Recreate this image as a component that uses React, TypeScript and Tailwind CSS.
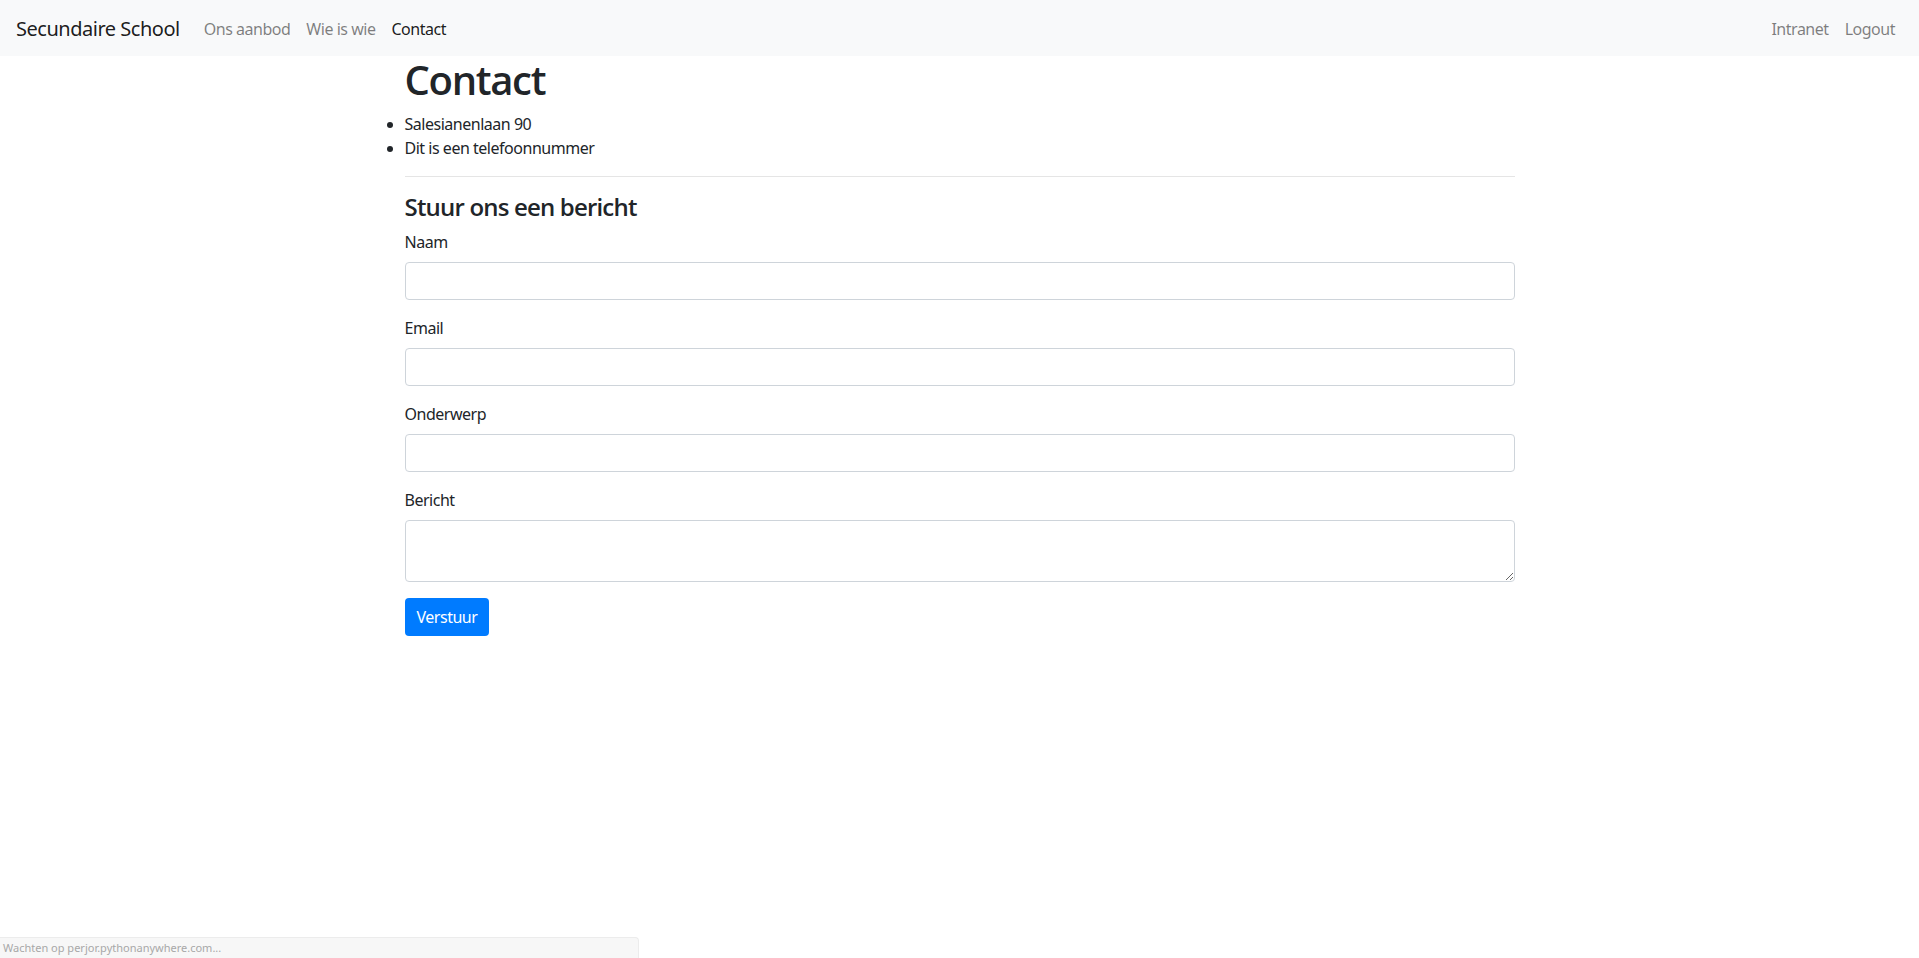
import React from "react"

const font = {
  fontFamily: '"Segoe UI", "Noto Sans", "Liberation Sans", sans-serif',
  letterSpacing: "-0.03em",
}

const headingFont = {
  fontFamily: '"Segoe UI", "Open Sans", "Noto Sans", sans-serif',
}

const NavLink = ({ children, active }: { children: React.ReactNode; active?: boolean }) => (
  <a
    href="#"
    className={
      active
        ? "px-2 pt-[9px] pb-[7px] text-[16px] leading-6 text-[rgba(0,0,0,0.9)]"
        : "px-2 pt-[9px] pb-[7px] text-[16px] leading-6 text-[rgba(0,0,0,0.5)]"
    }
  >
    {children}
  </a>
)

const Field = ({ label, textarea }: { label: string; textarea?: boolean }) => (
  <div className="mb-4">
    <label className="mb-2 block text-[16px] leading-6">{label}</label>
    {textarea ? (
      <textarea
        rows={2}
        className="block h-[62px] w-full rounded-[4px] border border-[#ced4da] px-3 py-[6px] text-[16px] leading-6 outline-none"
      />
    ) : (
      <input
        type="text"
        className="block h-[38px] w-full rounded-[4px] border border-[#ced4da] px-3 py-[6px] text-[16px] leading-6 outline-none"
      />
    )}
  </div>
)

export default function App() {
  return (
    <div className="min-h-screen bg-white text-[#212529]" style={font}>
      <nav className="flex h-14 items-center bg-[#f8f9fa] px-4">
        <a href="#" className="mr-4 pt-[6px] pb-[4px] text-[20px] leading-[30px] text-[rgba(0,0,0,0.9)]">
          Secundaire School
        </a>
        <div className="flex">
          <NavLink>Ons aanbod</NavLink>
          <NavLink>Wie is wie</NavLink>
          <NavLink active>Contact</NavLink>
        </div>
        <div className="ml-auto flex">
          <NavLink>Intranet</NavLink>
          <NavLink>Logout</NavLink>
        </div>
      </nav>

      <div className="mx-auto w-[1140px] px-[15px]">
        <h1 className="mb-2 text-[40px] font-semibold leading-[48px] tracking-[-0.033em]" style={headingFont}>
          Contact
        </h1>
        <ul className="mb-4 list-outside list-disc pl-0 text-[16px] leading-6">
          <li>Salesianenlaan 90</li>
          <li>Dit is een telefoonnummer</li>
        </ul>
        <hr className="mb-4 border-t border-[rgba(0,0,0,0.1)]" />
        <h4 className="mb-2 text-[24px] font-semibold leading-[28.8px] tracking-[-0.034em]" style={headingFont}>
          Stuur ons een bericht
        </h4>
        <form onSubmit={(e) => e.preventDefault()}>
          <Field label="Naam" />
          <Field label="Email" />
          <Field label="Onderwerp" />
          <Field label="Bericht" textarea />
          <button
            type="submit"
            className="h-[38px] rounded-[4px] bg-[#007bff] px-3 text-[16px] leading-6 text-white"
          >
            Verstuur
          </button>
        </form>
      </div>

      <div className="fixed bottom-0 left-0 flex h-[21px] w-[639px] items-center rounded-tr-[4px] border-t border-r border-[#ececec] bg-[#f7f7f7] pl-[3px] text-[11px] tracking-normal text-[#a8a8a8]">
        Wachten op perjor.pythonanywhere.com...
      </div>
    </div>
  )
}
